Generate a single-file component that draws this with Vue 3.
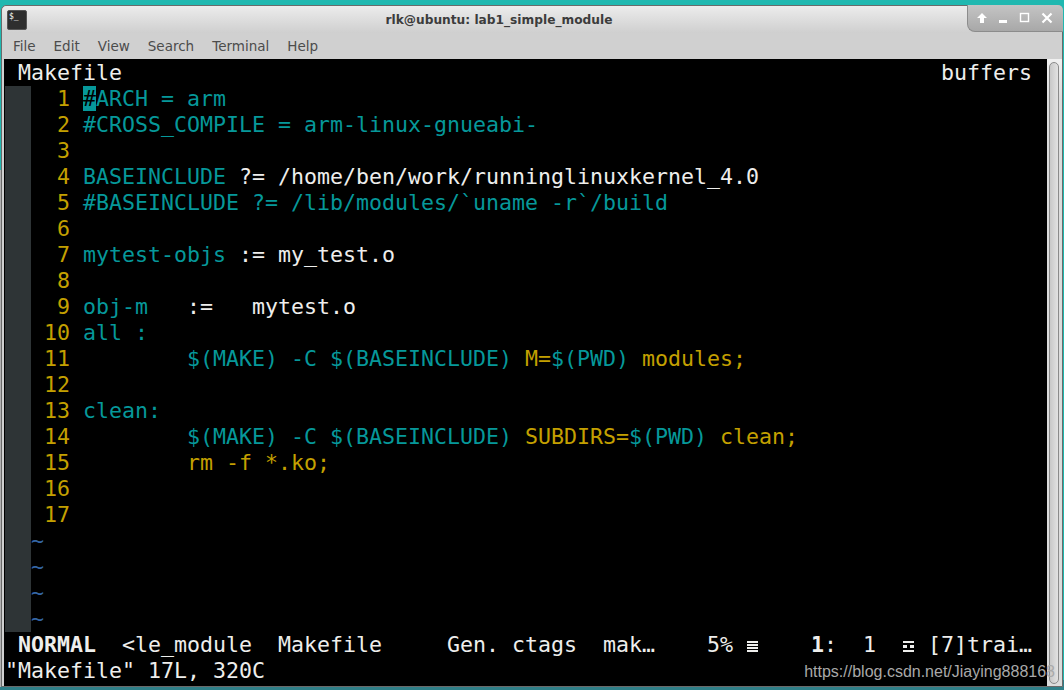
<script setup>
const lines = [
  [['c', '#ARCH = arm']],
  [['c', '#CROSS_COMPILE = arm-linux-gnueabi-']],
  [],
  [['c', 'BASEINCLUDE'], ['w', ' ?= /home/ben/work/runninglinuxkernel_4.0']],
  [['c', '#BASEINCLUDE ?= /lib/modules/`uname -r`/build']],
  [],
  [['c', 'mytest-objs'], ['w', ' := my_test.o']],
  [],
  [['c', 'obj-m'], ['w', '   :=   mytest.o']],
  [['c', 'all :']],
  [['w', '        '], ['c', '$(MAKE) -C $(BASEINCLUDE) '], ['y', 'M='], ['c', '$(PWD) '], ['y', 'modules;']],
  [],
  [['c', 'clean:']],
  [['w', '        '], ['c', '$(MAKE) -C $(BASEINCLUDE) '], ['y', 'SUBDIRS='], ['c', '$(PWD) '], ['y', 'clean;']],
  [['w', '        '], ['y', 'rm -f *.ko;']],
  [],
  [],
]
const menus = ['File', 'Edit', 'View', 'Search', 'Terminal', 'Help']
const numText = (i) => String(i + 1).padStart(3, ' ') + ' '
const statusLeft = ' '
const statusA = '  <le_module  Makefile     Gen. ctags  mak…    5% '
const statusB = '    '
const statusC = ':  1  '
const statusD = ' [7]trai…'
</script>

<template>
  <div class="desktop">
    <div class="window">
      <header class="titlebar">
        <div class="app-icon"><span>$_</span></div>
        <div class="title">rlk@ubuntu: lab1_simple_module</div>
        <div class="controls">
          <svg width="14" height="14" viewBox="0 0 14 14"><path d="M7 2 L12 7 H9 V12 H5 V7 H2 Z" fill="#fff" /></svg>
          <svg width="14" height="14" viewBox="0 0 14 14"><rect x="2" y="9" width="8" height="3" fill="#fff" /></svg>
          <svg width="14" height="14" viewBox="0 0 14 14"><rect x="2.5" y="2.5" width="8" height="8" fill="none" stroke="#fff" stroke-width="1.4" /></svg>
          <svg width="14" height="14" viewBox="0 0 14 14"><path d="M2.5 2.5 L11.5 11.5 M11.5 2.5 L2.5 11.5" stroke="#fff" stroke-width="2.2" /></svg>
        </div>
      </header>
      <nav class="menubar">
        <span v-for="m in menus" :key="m">{{ m }}</span>
      </nav>
      <div class="content">
        <div class="term">
          <div class="row tabline"><span class="w">{{ ' Makefile' }}</span><span class="w">buffers</span></div>
          <div v-for="(segs, i) in lines" :key="i" class="row">
            <span class="sign"></span><span class="num">{{ numText(i) }}</span><template v-if="i === 0"><span class="cursor">#</span><span class="c">ARCH = arm</span></template><template v-else><span v-for="(s, j) in segs" :key="j" :class="s[0]">{{ s[1] }}</span></template>
          </div>
          <div v-for="n in 4" :key="'t' + n" class="row">
            <span class="sign"></span><span class="tilde">~</span>
          </div>
          <div class="row status w">{{ statusLeft }}<b>NORMAL</b>{{ statusA }}<svg class="cell" width="13" height="26" viewBox="0 0 13 26"><path d="M1 9h11v2H1zM1 12h11v2H1zM1 15h11v2H1zM1 18h11v2H1z" fill="#eeeeec" /></svg>{{ statusB }}<b>1</b>{{ statusC }}<svg class="cell" width="13" height="26" viewBox="0 0 13 26"><path d="M1 9h11v2H1zM1 13h4v3H1zM8 13h4v3H8zM1 18h11v2H1z" fill="#eeeeec" /></svg>{{ statusD }}</div>
          <div class="row"><span class="w">"Makefile" 17L, 320C</span></div>
          <div class="watermark">https://blog.csdn.net/Jiaying888168</div>
        </div>
        <div class="scrollbar"><div class="thumb"></div></div>
      </div>
    </div>
  </div>
</template>

<style>
html, body { margin: 0; background: #20b8b0; overflow: hidden; }
</style>

<style scoped>
.desktop {
  position: relative;
  width: 1064px;
  height: 690px;
  padding-top: 5px;
  box-sizing: border-box;
  background: linear-gradient(#20b8b0 0, #20b8b0 680px, #2f7f88 680px);
  overflow: hidden;
}
.desktop::before {
  content: "";
  position: absolute;
  left: 0;
  top: 170px;
  bottom: 3px;
  width: 1px;
  background: #b0b0b0;
}
.window {
  height: 682px;
  width: 1062px;
  margin-left: 1px;
  background: #d0d0d0;
  border: 1px solid #6a6a6a;
  border-radius: 5px 5px 0 0;
  display: flex;
  flex-direction: column;
  font-family: "DejaVu Sans", sans-serif;
  box-sizing: border-box;
}
.titlebar {
  height: 27px;
  flex: none;
  position: relative;
  display: flex;
  align-items: center;
  justify-content: center;
  background: linear-gradient(#ececec, #cfcfcf);
  border-radius: 5px 5px 0 0;
}
.app-icon {
  position: absolute;
  left: 5px;
  top: 4px;
  width: 17px;
  height: 17px;
  background: #2e2e2e;
  border: 1px solid #555;
  border-radius: 2px;
  color: #fff;
  font: 8px "DejaVu Sans Mono", monospace;
  padding: 1px 0 0 1px;
  box-sizing: content-box;
}
.title {
  font-size: 12.2px;
  font-weight: bold;
  color: #3c3c3c;
  margin-left: -66px;
}
.controls {
  position: absolute;
  right: -1px;
  top: -1px;
  width: 96px;
  height: 27px;
  box-sizing: border-box;
  padding: 6px 9px 0 7px;
  display: flex;
  justify-content: space-between;
  background: linear-gradient(#c4c4c4, #a8a8a8);
  border: 1px solid #8c8c8c;
  border-top: 0;
  border-right: 0;
  border-radius: 0 5px 0 8px;
}
.menubar {
  height: 26px;
  flex: none;
  display: flex;
  align-items: center;
  gap: 18px;
  padding-left: 11px;
  box-sizing: border-box;
  font-size: 13.5px;
  color: #4c4c4c;
}
.content {
  flex: 1;
  display: flex;
  min-height: 0;
  padding-left: 2px;
}
.term {
  width: 1043px;
  flex: none;
  position: relative;
  background: #000;
  padding-top: 1px;
  box-sizing: border-box;
  font-family: "DejaVu Sans Mono", monospace;
  font-size: 21.6px;
}
.row {
  height: 26px;
  line-height: 26px;
  white-space: pre;
  padding-left: 1px;
}
.tabline {
  display: flex;
  justify-content: space-between;
  padding-right: 15px;
}
.sign {
  display: inline-block;
  width: 26px;
  height: 26px;
  vertical-align: top;
  background: #2e3436;
}
.cell {
  vertical-align: top;
}
.num { color: #c4a000; }
.c { color: #06989a; }
.w { color: #eeeeec; }
.y { color: #c4a000; }
.cursor { background: #06989a; color: #000; }
.tilde { color: #3465a4; }
.status b { font-weight: bold; }
.watermark {
  position: absolute;
  right: -8px;
  bottom: 5px;
  font: 16px "Liberation Sans", sans-serif;
  color: #a9a9a9;
}
.scrollbar {
  flex: 1;
  background: linear-gradient(#f0f0f0, #dcdcdc 40px);
  padding: 3px 3px 2px 2px;
  display: flex;
}
.thumb {
  flex: 1;
  background: linear-gradient(90deg, #c8c8c8, #e2e2e2);
  border: 1px solid #8a8a8a;
  border-radius: 5px;
}
</style>
